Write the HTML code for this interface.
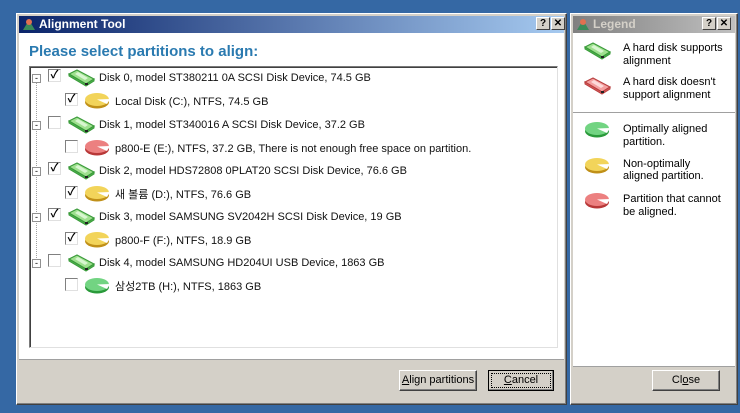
<!DOCTYPE html>
<html><head><meta charset="utf-8"><style>
*{margin:0;padding:0;box-sizing:border-box}
body{width:740px;height:413px;background:#3568a4;position:relative;overflow:hidden;font-family:"Liberation Sans","Noto Sans CJK KR",sans-serif;font-size:11px;color:#000}
.win{position:absolute;background:#d4d0c8;border:1px solid #fff;border-right-color:#404040;border-bottom-color:#404040;box-shadow:inset -1px -1px 0 #808080}
.tb{position:absolute;left:2px;right:2px;top:2px;height:17px;color:#fff;font-weight:bold;font-size:12px;line-height:17px;padding-left:20px}
.tbtn{position:absolute;top:3px;width:14px;height:13px;background:#d4d0c8;border:1px solid #fff;border-right-color:#404040;border-bottom-color:#404040;font-size:10px;font-weight:bold;color:#000;text-align:center;line-height:11px}
.white{position:absolute;background:#fff}
.row{position:absolute;height:18px;line-height:18px;white-space:nowrap;font-size:11px;color:#111}
.cb{position:absolute;width:13px;height:13px;border:1px solid #808080;border-right-color:#e0e0e0;border-bottom-color:#e0e0e0;background:#fff;font-size:11px;line-height:10px;text-align:center;font-weight:bold}
.exp{position:absolute;width:9px;height:9px;border:1px solid #919191;background:#fff;font-size:9px;line-height:6px;text-align:center;color:#000}
.btn{position:absolute;height:21px;background:#d4d0c8;border:1px solid #fff;border-right-color:#404040;border-bottom-color:#404040;box-shadow:inset -1px -1px 0 #808080;text-align:center;line-height:19px;font-size:11px}
</style></head><body>
<svg width="0" height="0" style="position:absolute"><defs>
<g id="dg"><path d="M1 6 L9 2 L26 11 L18 16 Z" fill="#9ee08e" stroke="#3a9a3a" stroke-width="1.2"/><path d="M1 6 L1 8 L18 18 L26 13 L26 11 L18 16 Z" fill="#4bb04b" stroke="#3a9a3a"/><path d="M7 6 L10 4 L20 10 L17 12 Z" fill="#d8f6d0"/><rect x="17" y="15" width="3" height="2" fill="#222"/></g>
<g id="dr"><path d="M1 6 L9 2 L26 11 L18 16 Z" fill="#f4a0a0" stroke="#b84040" stroke-width="1.2"/><path d="M1 6 L1 8 L18 18 L26 13 L26 11 L18 16 Z" fill="#d85858" stroke="#b84040"/><path d="M7 6 L10 4 L20 10 L17 12 Z" fill="#fcdada"/><rect x="17" y="15" width="3" height="2" fill="#222"/></g>
<g id="py"><ellipse cx="13" cy="11" rx="12" ry="6.5" fill="#c09018"/><ellipse cx="13" cy="8.5" rx="12" ry="6.5" fill="#f2d45a"/><path d="M13 8.5 L26 8 L23 13Z" fill="#fff"/></g>
<g id="pg"><ellipse cx="13" cy="11" rx="12" ry="6.5" fill="#2a9a3a"/><ellipse cx="13" cy="8.5" rx="12" ry="6.5" fill="#72d482"/><path d="M13 8.5 L26 8 L23 13Z" fill="#fff"/></g>
<g id="pr"><ellipse cx="13" cy="11" rx="12" ry="6.5" fill="#b83838"/><ellipse cx="13" cy="8.5" rx="12" ry="6.5" fill="#ec8080"/><path d="M13 8.5 L26 8 L23 13Z" fill="#fff"/></g>
</defs></svg>
<div class="win" style="left:16px;top:13px;width:551px;height:392px">
 <div class="tb" style="background:linear-gradient(90deg,#0a246a,#a6caf0)">Alignment Tool
  <svg style="position:absolute;left:2px;top:1px" width="16" height="15"><path d="M2 13 L8 3 L14 13Z" fill="#3a8a5a"/><circle cx="8" cy="5" r="3" fill="#e07050"/></svg>
 </div>
 <div class="tbtn" style="left:519px">?</div><div class="tbtn" style="left:534px">✕</div>
 <div class="white" style="left:2px;top:19px;width:545px;height:326px"></div>
 <div style="position:absolute;left:12px;top:29px;font-size:15px;font-weight:bold;color:#2a7ab0">Please select partitions to align:</div>
 <div class="white" style="left:12px;top:52px;width:529px;height:282px;border:1px solid #7a7a7a;border-right-color:#e0e0e0;border-bottom-color:#e0e0e0;box-shadow:inset 1px 1px 0 #404040"></div>
 <div style="position:absolute;left:2px;top:345px;width:545px;height:1px;background:#a0a0a0"></div>
</div>
<div style="position:absolute;left:36px;top:80px;width:0;height:186px;border-left:1px dotted #a0a0a0"></div>

<div class="exp" style="left:32px;top:74px">-</div><div class="cb" style="left:48px;top:69px">✓</div>
<svg style="position:absolute;left:68px;top:68px" width="28" height="20"><use href="#dg"/></svg>
<div class="row" style="left:99px;top:69px">Disk 0, model ST380211 0A SCSI Disk Device, 74.5 GB</div>
<div class="cb" style="left:65px;top:93px">✓</div>
<svg style="position:absolute;left:84px;top:91px" width="28" height="20"><use href="#py"/></svg>
<div class="row" style="left:115px;top:93px">Local Disk (C:), NTFS, 74.5 GB</div>

<div class="exp" style="left:32px;top:121px">-</div><div class="cb" style="left:48px;top:116px"></div>
<svg style="position:absolute;left:68px;top:115px" width="28" height="20"><use href="#dg"/></svg>
<div class="row" style="left:99px;top:116px">Disk 1, model ST340016 A SCSI Disk Device, 37.2 GB</div>
<div class="cb" style="left:65px;top:140px"></div>
<svg style="position:absolute;left:84px;top:138px" width="28" height="20"><use href="#pr"/></svg>
<div class="row" style="left:115px;top:140px">p800-E (E:), NTFS, 37.2 GB, There is not enough free space on partition.</div>

<div class="exp" style="left:32px;top:167px">-</div><div class="cb" style="left:48px;top:162px">✓</div>
<svg style="position:absolute;left:68px;top:161px" width="28" height="20"><use href="#dg"/></svg>
<div class="row" style="left:99px;top:162px">Disk 2, model HDS72808 0PLAT20 SCSI Disk Device, 76.6 GB</div>
<div class="cb" style="left:65px;top:186px">✓</div>
<svg style="position:absolute;left:84px;top:184px" width="28" height="20"><use href="#py"/></svg>
<div class="row" style="left:115px;top:186px">새 볼륨 (D:), NTFS, 76.6 GB</div>

<div class="exp" style="left:32px;top:213px">-</div><div class="cb" style="left:48px;top:208px">✓</div>
<svg style="position:absolute;left:68px;top:207px" width="28" height="20"><use href="#dg"/></svg>
<div class="row" style="left:99px;top:208px">Disk 3, model SAMSUNG SV2042H SCSI Disk Device, 19 GB</div>
<div class="cb" style="left:65px;top:232px">✓</div>
<svg style="position:absolute;left:84px;top:230px" width="28" height="20"><use href="#py"/></svg>
<div class="row" style="left:115px;top:232px">p800-F (F:), NTFS, 18.9 GB</div>

<div class="exp" style="left:32px;top:259px">-</div><div class="cb" style="left:48px;top:254px"></div>
<svg style="position:absolute;left:68px;top:253px" width="28" height="20"><use href="#dg"/></svg>
<div class="row" style="left:99px;top:254px">Disk 4, model SAMSUNG HD204UI USB Device, 1863 GB</div>
<div class="cb" style="left:65px;top:278px"></div>
<svg style="position:absolute;left:84px;top:276px" width="28" height="20"><use href="#pg"/></svg>
<div class="row" style="left:115px;top:278px">삼성2TB (H:), NTFS, 1863 GB</div>

<div class="btn" style="left:399px;top:370px;width:78px"><u>A</u>lign partitions</div>
<div class="btn" style="left:488px;top:370px;width:66px;border-color:#000;outline:1px dotted #000;outline-offset:-4px"><u>C</u>ancel</div>

<div class="win" style="left:570px;top:13px;width:168px;height:392px">
 <div class="tb" style="background:linear-gradient(90deg,#808080,#c0c0c0);color:#d4d0c8">Legend
  <svg style="position:absolute;left:2px;top:1px" width="16" height="15"><path d="M2 13 L8 3 L14 13Z" fill="#3a8a5a"/><circle cx="8" cy="5" r="3" fill="#e07050"/></svg></div>
 <div class="tbtn" style="left:131px">?</div><div class="tbtn" style="left:146px">✕</div>
 <div class="white" style="left:2px;top:19px;width:162px;height:333px"></div>
 <div style="position:absolute;left:2px;top:98px;width:162px;height:1px;background:#a0a0a0"></div>
 <div style="position:absolute;left:2px;top:352px;width:162px;height:1px;background:#a0a0a0"></div>
</div>
<svg style="position:absolute;left:584px;top:41px" width="28" height="20"><use href="#dg"/></svg>
<svg style="position:absolute;left:584px;top:76px" width="28" height="20"><use href="#dr"/></svg>
<svg style="position:absolute;left:584px;top:120px" width="28" height="20"><use href="#pg"/></svg>
<svg style="position:absolute;left:584px;top:156px" width="28" height="20"><use href="#py"/></svg>
<svg style="position:absolute;left:584px;top:191px" width="28" height="20"><use href="#pr"/></svg>
<div style="position:absolute;left:623px;top:42px;line-height:13px;font-size:11px">A hard disk supports<br>alignment</div>
<div style="position:absolute;left:623px;top:76px;line-height:13px;font-size:11px">A hard disk doesn't<br>support alignment</div>
<div style="position:absolute;left:623px;top:123px;line-height:13px;font-size:11px">Optimally aligned<br>partition.</div>
<div style="position:absolute;left:623px;top:158px;line-height:12px;font-size:11px">Non-optimally<br>aligned partition.</div>
<div style="position:absolute;left:623px;top:193px;line-height:13px;font-size:11px">Partition that cannot<br>be aligned.</div>
<div class="btn" style="left:652px;top:370px;width:68px">Cl<u>o</u>se</div>
</body></html>
